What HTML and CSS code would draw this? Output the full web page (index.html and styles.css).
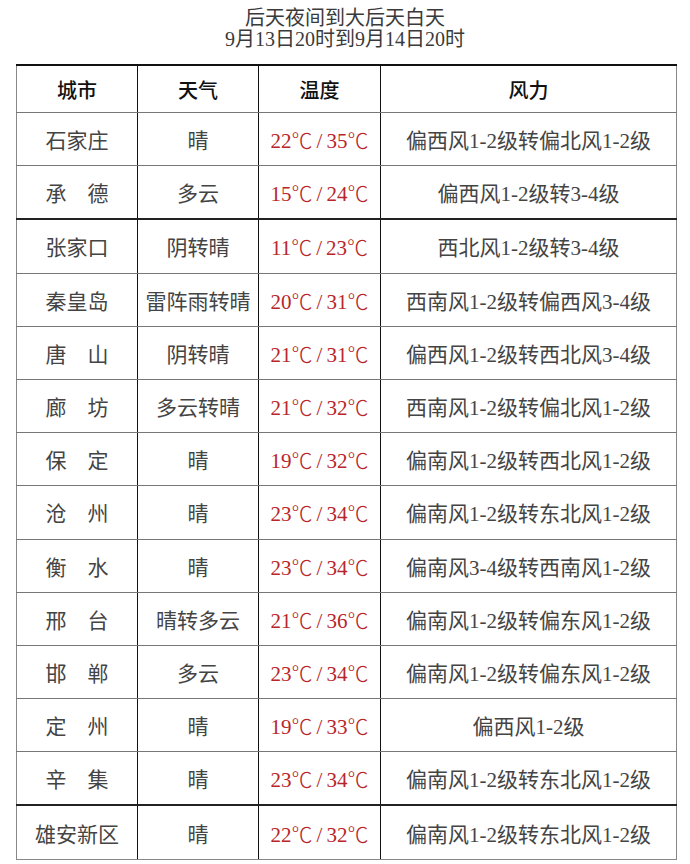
FILE: index.html
```html
<!DOCTYPE html>
<html lang="zh-CN">
<head>
<meta charset="utf-8">
<title>天气预报</title>
<link rel="stylesheet" href="styles.css">
</head>
<body>
<div class="page">
  <div class="title">
    <div class="t1">后天夜间到大后天白天</div>
    <div class="t2">9月13日20时到9月14日20时</div>
  </div>
  <table class="wx">
    <colgroup>
      <col class="c1"><col class="c2"><col class="c3"><col class="c4">
    </colgroup>
    <thead>
      <tr><th>城市</th><th>天气</th><th>温度</th><th>风力</th></tr>
    </thead>
    <tbody>
      <tr><td>石家庄</td><td>晴</td><td class="temp">22<span class="dc">℃</span><span class="sl">/</span>35<span class="dc">℃</span></td><td>偏西风1-2级转偏北风1-2级</td></tr>
      <tr class="dk"><td>承　德</td><td>多云</td><td class="temp">15<span class="dc">℃</span><span class="sl">/</span>24<span class="dc">℃</span></td><td>偏西风1-2级转3-4级</td></tr>
      <tr><td>张家口</td><td>阴转晴</td><td class="temp">11<span class="dc">℃</span><span class="sl">/</span>23<span class="dc">℃</span></td><td>西北风1-2级转3-4级</td></tr>
      <tr><td>秦皇岛</td><td>雷阵雨转晴</td><td class="temp">20<span class="dc">℃</span><span class="sl">/</span>31<span class="dc">℃</span></td><td>西南风1-2级转偏西风3-4级</td></tr>
      <tr><td>唐　山</td><td>阴转晴</td><td class="temp">21<span class="dc">℃</span><span class="sl">/</span>31<span class="dc">℃</span></td><td>偏西风1-2级转西北风3-4级</td></tr>
      <tr><td>廊　坊</td><td>多云转晴</td><td class="temp">21<span class="dc">℃</span><span class="sl">/</span>32<span class="dc">℃</span></td><td>西南风1-2级转偏北风1-2级</td></tr>
      <tr><td>保　定</td><td>晴</td><td class="temp">19<span class="dc">℃</span><span class="sl">/</span>32<span class="dc">℃</span></td><td>偏南风1-2级转西北风1-2级</td></tr>
      <tr><td>沧　州</td><td>晴</td><td class="temp">23<span class="dc">℃</span><span class="sl">/</span>34<span class="dc">℃</span></td><td>偏南风1-2级转东北风1-2级</td></tr>
      <tr><td>衡　水</td><td>晴</td><td class="temp">23<span class="dc">℃</span><span class="sl">/</span>34<span class="dc">℃</span></td><td>偏南风3-4级转西南风1-2级</td></tr>
      <tr><td>邢　台</td><td>晴转多云</td><td class="temp">21<span class="dc">℃</span><span class="sl">/</span>36<span class="dc">℃</span></td><td>偏南风1-2级转偏东风1-2级</td></tr>
      <tr><td>邯　郸</td><td>多云</td><td class="temp">23<span class="dc">℃</span><span class="sl">/</span>34<span class="dc">℃</span></td><td>偏南风1-2级转偏东风1-2级</td></tr>
      <tr><td>定　州</td><td>晴</td><td class="temp">19<span class="dc">℃</span><span class="sl">/</span>33<span class="dc">℃</span></td><td>偏西风1-2级</td></tr>
      <tr class="dk"><td>辛　集</td><td>晴</td><td class="temp">23<span class="dc">℃</span><span class="sl">/</span>34<span class="dc">℃</span></td><td>偏南风1-2级转东北风1-2级</td></tr>
      <tr class="last"><td>雄安新区</td><td>晴</td><td class="temp">22<span class="dc">℃</span><span class="sl">/</span>32<span class="dc">℃</span></td><td>偏南风1-2级转东北风1-2级</td></tr>
    </tbody>
  </table>
</div>
</body>
</html>
```

FILE: styles.css
```css
html, body {
  margin: 0;
  padding: 0;
  background: #ffffff;
}
.page {
  width: 690px;
  height: 864px;
  overflow: hidden;
  font-family: "Liberation Serif", "Noto Sans CJK SC", serif;
  color: #444;
}
.title {
  padding-top: 8px;
  text-align: center;
  font-size: 20px;
  line-height: 21px;
  color: #3a3a3a;
  margin-bottom: 14px;
}
.wx {
  margin-left: 16px;
  width: 660px;
  border-collapse: collapse;
  table-layout: fixed;
  font-size: 21px;
}
.c1 { width: 121px; }
.c2 { width: 121px; }
.c3 { width: 122px; }
.c4 { width: 296px; }
.wx th, .wx td {
  padding: 0;
  text-align: center;
  vertical-align: middle;
  white-space: nowrap;
  border-left: 1.5px solid #111;
  border-right: 1.5px solid #111;
  border-top: 1px solid #777;
  border-bottom: 1px solid #777;
}
.wx th:first-child, .wx td:first-child { border-left: 1px solid #888; }
.wx th:last-child, .wx td:last-child { border-right: 1px solid #888; }
.wx thead th {
  height: 46px;
  font-size: 20px;
  font-weight: 500;
  color: #111;
  border-top: 2px solid #111;
}
.wx tbody td { height: 52.2px; }
.wx tr.dk td { border-bottom: 2px solid #222; }
.wx tr.last td { border-bottom: 1px solid #888; }
.temp {
  color: #b8262a;
}
.dc {
  font-family: "Noto Sans CJK SC", sans-serif;
  font-weight: 300;
}
.sl {
  margin: 0 4px;
}
```
